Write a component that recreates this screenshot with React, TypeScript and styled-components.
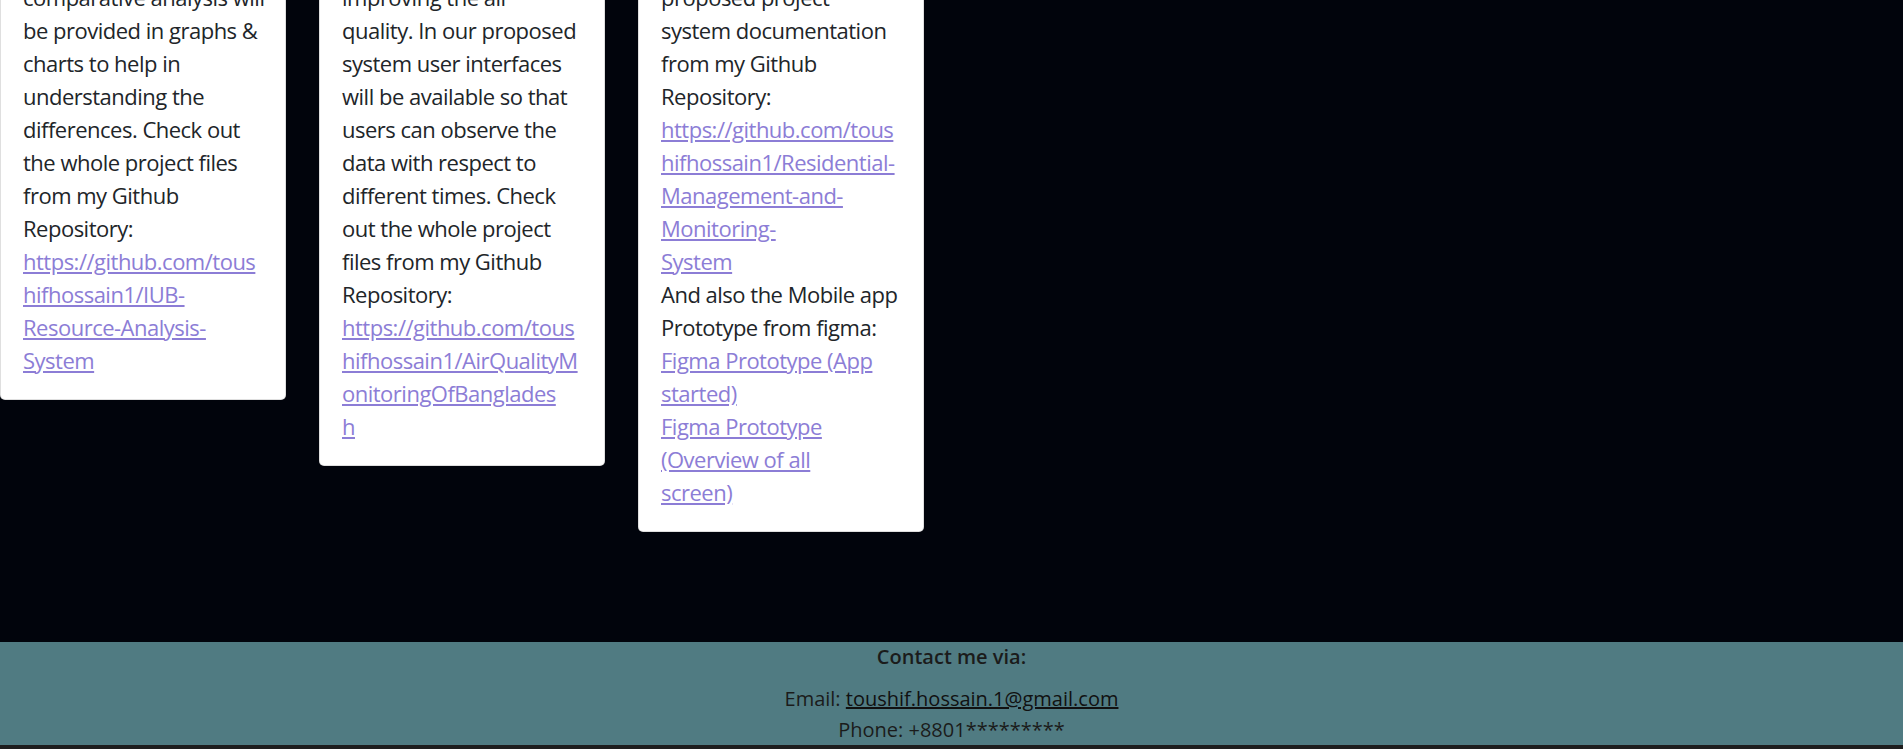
import { FC } from 'react';
import styled, { createGlobalStyle } from 'styled-components';

const GlobalStyle = createGlobalStyle`
  html, body {
    margin: 0;
    padding: 0;
  }

  body {
    background: #01040c;
    font-family: 'Open Sans', 'Noto Sans', sans-serif;
    overflow: hidden;
  }
`;

const Page = styled.div`
  min-height: 100vh;
  display: flex;
  flex-direction: column;
`;

const Projects = styled.section`
  flex: 1;
  display: flex;
  align-items: flex-start;
  gap: 33px;
  margin-top: -38.5px;
`;

const Card = styled.article`
  width: 286px;
  box-sizing: border-box;
  padding: 18px 22px 22px;
  background: #fff;
  border: 1px solid rgba(0, 0, 0, 0.125);
  border-radius: 5px;
  color: #212529;
  font-size: 22px;
  line-height: 33px;
  letter-spacing: -0.5px;
`;

// lines are broken as in the original layout
const CardText = styled.p`
  margin: 0;
  white-space: nowrap;
`;

const RepoLink = styled.a`
  color: #8c7dd6;
  text-decoration: underline;
`;

const Footer = styled.footer`
  background: #507b82;
  border-bottom: 4px solid #1e1e1e;
  text-align: center;
  color: #1b1b1b;
  font-size: 20px;
  line-height: 31px;
`;

const FooterTitle = styled.h4`
  margin: 0 0 11px;
  font-size: 20px;
  line-height: 30px;
  font-weight: 600;
`;

const FooterLine = styled.p`
  margin: 0;
`;

const MailLink = styled.a`
  color: #111;
  text-decoration: underline;
`;

interface ProjectCardProps {
  children: React.ReactNode;
}

const ProjectCard: FC<ProjectCardProps> = ({ children }) => (
  <Card>
    <CardText>{children}</CardText>
  </Card>
);

export default function App() {
  return (
    <>
      <GlobalStyle />
      <Page>
        <Projects>
          <ProjectCard>
            comparative analysis will
            <br />
            be provided in graphs &amp;
            <br />
            charts to help in
            <br />
            understanding the
            <br />
            differences. Check out
            <br />
            the whole project files
            <br />
            from my Github
            <br />
            Repository:
            <br />
            <RepoLink href="#">
              https://github.com/tous
              <br />
              hifhossain1/IUB-
              <br />
              Resource-Analysis-
              <br />
              System
            </RepoLink>
          </ProjectCard>

          <ProjectCard>
            improving the air
            <br />
            quality. In our proposed
            <br />
            system user interfaces
            <br />
            will be available so that
            <br />
            users can observe the
            <br />
            data with respect to
            <br />
            different times. Check
            <br />
            out the whole project
            <br />
            files from my Github
            <br />
            Repository:
            <br />
            <RepoLink href="#">
              https://github.com/tous
              <br />
              hifhossain1/AirQualityM
              <br />
              onitoringOfBanglades
              <br />h
            </RepoLink>
          </ProjectCard>

          <ProjectCard>
            proposed project
            <br />
            system documentation
            <br />
            from my Github
            <br />
            Repository:
            <br />
            <RepoLink href="#">
              https://github.com/tous
              <br />
              hifhossain1/Residential-
              <br />
              Management-and-
              <br />
              Monitoring-
              <br />
              System
            </RepoLink>
            <br />
            And also the Mobile app
            <br />
            Prototype from figma:
            <br />
            <RepoLink href="#">
              Figma Prototype (App
              <br />
              started)
            </RepoLink>
            <br />
            <RepoLink href="#">
              Figma Prototype
              <br />
              (Overview of all
              <br />
              screen)
            </RepoLink>
          </ProjectCard>
        </Projects>

        <Footer>
          <FooterTitle>Contact me via:</FooterTitle>
          <FooterLine>
            Email: <MailLink href="#">toushif.hossain.1@gmail.com</MailLink>
          </FooterLine>
          <FooterLine>Phone: +8801*********</FooterLine>
        </Footer>
      </Page>
    </>
  );
}
